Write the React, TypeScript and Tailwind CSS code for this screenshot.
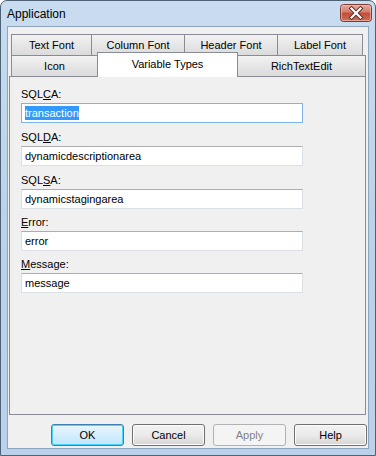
import { Fragment } from 'react'

const backTabs = [
  { label: 'Text Font', w: 'w-[81px]' },
  { label: 'Column Font', w: 'w-[94px]' },
  { label: 'Header Font', w: 'w-[94px]' },
  { label: 'Label Font', w: 'w-[86px]' }
]

const fields = [
  { pre: 'SQL', key: 'C', post: 'A:', value: 'transaction', focused: true, gap: 'mt-0' },
  { pre: 'SQL', key: 'D', post: 'A:', value: 'dynamicdescriptionarea', gap: 'mt-[8px]' },
  { pre: 'SQL', key: 'S', post: 'A:', value: 'dynamicstagingarea', gap: 'mt-[8px]' },
  { pre: '', key: 'E', post: 'rror:', value: 'error', gap: 'mt-[7px]' },
  { pre: '', key: 'M', post: 'essage:', value: 'message', gap: 'mt-[7px]' }
]

function CloseButton() {
  return (
    <svg width="32" height="18" viewBox="0 0 32 18">
      <defs>
        <linearGradient id="cb" x1="0" y1="0" x2="0" y2="1">
          <stop offset="0" stopColor="#e9a99c" />
          <stop offset="0.45" stopColor="#d47c6a" />
          <stop offset="0.5" stopColor="#c24e38" />
          <stop offset="1" stopColor="#d0705a" />
        </linearGradient>
      </defs>
      <rect x="0.5" y="0.5" width="31" height="17" rx="3" fill="url(#cb)" stroke="#7d3b35" />
      <rect x="1.5" y="1.5" width="29" height="15" rx="2" fill="none" stroke="#f3c9bf" strokeOpacity="0.6" />
      <path d="M11.5 4.5 L20.5 13.5 M20.5 4.5 L11.5 13.5" stroke="#5a2a26" strokeWidth="4" strokeLinecap="square" />
      <path d="M11.5 4.5 L20.5 13.5 M20.5 4.5 L11.5 13.5" stroke="#ffffff" strokeWidth="2.2" strokeLinecap="square" />
    </svg>
  )
}

function Button({ label, primary, disabled }: { label: string; primary?: boolean; disabled?: boolean }) {
  const base = 'w-[73px] h-[22px] rounded-[3px] border flex items-center justify-center'
  if (primary)
    return (
      <div className={`${base} border-[#3c7fb1] bg-gradient-to-b from-[#eaf6fd] to-[#bee6fd] shadow-[inset_0_0_0_1px_#48d7fa]`}>
        {label}
      </div>
    )
  if (disabled)
    return (
      <div className={`${base} border-[#adb2b5] bg-[#f4f4f4] text-[#838383]`}>{label}</div>
    )
  return (
    <div className={`${base} border-[#707070] bg-gradient-to-b from-[#f2f2f2] via-[#ebebeb] to-[#d5d5d5] shadow-[inset_0_0_0_1px_#fcfcfc]`}>
      {label}
    </div>
  )
}

export default function App() {
  return (
    <div className="w-[376px] h-[456px] bg-white font-['Liberation_Sans',Arial,sans-serif] text-[11px] text-black">
      <div className="w-full h-full flex flex-col rounded-t-[7px] border border-[#4e6275] bg-gradient-to-b from-[#c9dcf0] via-[#bad2ea] to-[#b9d1ea]">
        <div className="h-[25px] flex items-start justify-between shrink-0">
          <span className="ml-[6px] mt-[5px] text-[12px] leading-[16px]">Application</span>
          <div className="mt-[3px] mr-[3px]">
            <CloseButton />
          </div>
        </div>
        <div className="mx-[6px] mb-[6px] flex-1 border border-[#8fa5bc] bg-[#f0f0f0] flex flex-col">
          <div className="ml-[1px] mt-[6px] w-[357px] flex flex-col">
            <div className="flex pl-[2px] h-[22px] items-end">
              {backTabs.map((t) => (
                <div
                  key={t.label}
                  className={`${t.w} h-[21px] border border-b-0 border-[#898c95] -ml-[1px] first:ml-0 bg-gradient-to-b from-[#f2f2f2] to-[#dbdbdb] flex items-center justify-center`}
                >
                  {t.label}
                </div>
              ))}
            </div>
            <div className="flex pl-[2px] h-[22px] items-end relative z-10 -mb-[1px]">
              <div className="w-[87px] h-[22px] border border-[#898c95] bg-gradient-to-b from-[#f2f2f2] to-[#dbdbdb] flex items-center justify-center">
                Icon
              </div>
              <div className="w-[141px] h-[25px] -ml-[1px] border border-b-0 border-[#898c95] bg-white flex items-start justify-center pt-[3px] relative z-10">
                Variable Types
              </div>
              <div className="w-[129px] h-[22px] -ml-[1px] border border-[#898c95] bg-gradient-to-b from-[#f2f2f2] to-[#dbdbdb] flex items-center justify-center">
                RichTextEdit
              </div>
            </div>
            <div className="h-[339px] border border-[#898c95] bg-[#f0f0f0] pl-[11px] pt-[11px] flex flex-col">
              {fields.map((f) => (
                <div key={f.value} className={`${f.gap} flex flex-col`}>
                  <div className="h-[13px] leading-[13px] mb-[2px]">
                    {f.pre}
                    <span className="underline underline-offset-[1px]">{f.key}</span>
                    {f.post}
                  </div>
                  <div
                    className={`w-[282px] h-[20px] border bg-white flex items-center pl-[3px] ${
                      f.focused
                        ? 'border-[#7eb4ea]'
                        : 'border-[#dbdfe6] border-t-[#abadb3]'
                    }`}
                  >
                    {f.focused ? (
                      <span className="bg-[#3399ff] text-white leading-[14px]">{f.value}</span>
                    ) : (
                      <Fragment>{f.value}</Fragment>
                    )}
                  </div>
                </div>
              ))}
            </div>
          </div>
          <div className="flex-1" />
          <div className="flex justify-end gap-[8px] pr-[1px] mb-[2px]">
            <Button label="OK" primary />
            <Button label="Cancel" />
            <Button label="Apply" disabled />
            <Button label="Help" />
          </div>
        </div>
      </div>
    </div>
  )
}
